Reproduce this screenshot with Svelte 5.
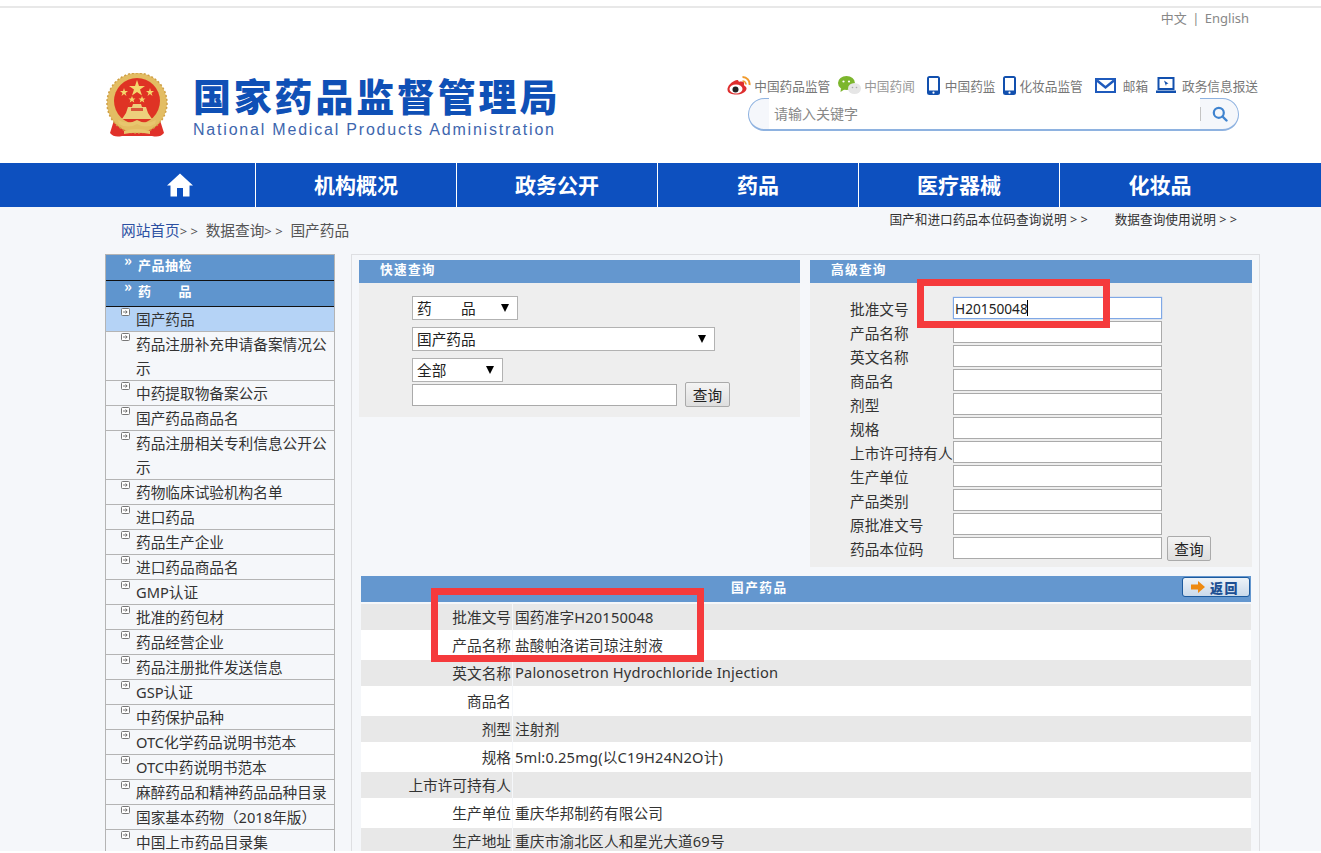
<script>
    const nav = ['机构概况', '政务公开', '药品', '医疗器械', '化妆品'];

    const sideItems = [
        '国产药品', '药品注册补充申请备案情况公示', '中药提取物备案公示', '国产药品商品名',
        '药品注册相关专利信息公开公示', '药物临床试验机构名单', '进口药品', '药品生产企业',
        '进口药品商品名', 'GMP认证', '批准的药包材', '药品经营企业', '药品注册批件发送信息',
        'GSP认证', '中药保护品种', 'OTC化学药品说明书范本', 'OTC中药说明书范本',
        '麻醉药品和精神药品品种目录', '国家基本药物（2018年版）', '中国上市药品目录集'
    ];

    const advFields = [
        '产品名称', '英文名称', '商品名', '剂型', '规格', '上市许可持有人',
        '生产单位', '产品类别', '原批准文号'
    ];

    const details = [
        ['批准文号', '国药准字H20150048'],
        ['产品名称', '盐酸帕洛诺司琼注射液'],
        ['英文名称', 'Palonosetron Hydrochloride Injection'],
        ['商品名', ''],
        ['剂型', '注射剂'],
        ['规格', '5ml:0.25mg(以C19H24N2O计)'],
        ['上市许可持有人', ''],
        ['生产单位', '重庆华邦制药有限公司'],
        ['生产地址', '重庆市渝北区人和星光大道69号']
    ];
</script>

<div class="page">
    <div class="topline"></div>

    <div class="wrap">
        <div class="lang">中文 <i>|</i> English</div>

        <div class="brand">
            <div class="logo">
                <svg class="emblem" viewBox="0 0 62 66" width="62" height="66" aria-hidden="true">
                    <path d="M9 44 L4 60 Q8 65 16 63 L46 63 Q54 65 58 60 L53 44 Z" fill="#e0312a" />
                    <circle cx="31" cy="30" r="30" fill="#e3bd63" />
                    <circle cx="31" cy="30" r="30" fill="none" stroke="#cf9f45" stroke-width="1.5" stroke-dasharray="2 2" />
                    <circle cx="31" cy="28" r="23" fill="#df3324" />
                    <polygon points="31,7 33,13 39,13 34,16.5 36,22.500 31,19 26,22.500 28,16.500 23,13 29,13" fill="#f4d76c" />
                    <polygon points="18,15 19,18 22,18 19.500,20 20.500,23 18,21 15.500,23 16.500,20 14,18 17,18" fill="#f4d76c" />
                    <polygon points="44,15 45,18 48,18 45.500,20 46.500,23 44,21 41.500,23 42.500,20 40,18 43,18" fill="#f4d76c" />
                    <polygon points="26,23 27,25.500 29.500,25.500 27.500,27 28.300,29.500 26,28 23.700,29.500 24.500,27 22.500,25.500 25,25.500" fill="#f4d76c" />
                    <polygon points="36,23 37,25.500 39.500,25.500 37.500,27 38.300,29.500 36,28 33.700,29.500 34.500,27 32.500,25.500 35,25.500" fill="#f4d76c" />
                    <path d="M20 40 L22 34 H26 L27 31 H35 L36 34 H40 L42 40 L46 46 H16 Z" fill="#edcf7c" />
                    <path d="M25 35 H37 V38 H25 Z" fill="#d9573a" />
                    <path d="M12 47 Q22 52 31 47 Q40 52 50 47 L49 51 Q40 56 31 51 Q22 56 13 51 Z" fill="#e8c66e" />
                    <path d="M18 58 Q31 54 44 58 L44 61 Q31 58 18 61 Z" fill="#e8c66e" />
                </svg>
                <div class="wordmark">
                    <div class="cn">国家药品监督管理局</div>
                    <div class="en">National Medical Products Administration</div>
                </div>
            </div>

            <div class="tools">
                <div class="links">
                    <a>
                        <svg viewBox="0 0 24 20" width="24" height="20" aria-hidden="true">
                            <path d="M10 5 C5 6 0 11 0.500 15 C1 19 7 20 11 19.500 C16 19 20 16 19.500 13 C19 11 17 11 17 10 C18 7 16 6 13 6.500 C11 7.500 12 4.500 10 5 Z" fill="#de2e2e" />
                            <ellipse cx="9" cy="14" rx="6.500" ry="4.500" fill="#fff" />
                            <circle cx="8.500" cy="14.500" r="3" fill="#222" />
                            <path d="M15.500 2 A7 7 0 0 1 22.500 10" fill="none" stroke="#f09a2c" stroke-width="2" />
                            <path d="M15.500 6 A3.500 3.500 0 0 1 19 9.500" fill="none" stroke="#f09a2c" stroke-width="1.700" />
                        </svg>
                        中国药品监管
                    </a>
                    <a class="soft">
                        <svg viewBox="0 0 23 18" width="23" height="18" aria-hidden="true">
                            <ellipse cx="8.500" cy="7" rx="8.500" ry="7" fill="#7cb62d" />
                            <path d="M3 12 L2.500 16 L7 13 Z" fill="#7cb62d" />
                            <circle cx="5.500" cy="5.500" r="1.100" fill="#fff" />
                            <circle cx="11" cy="5.500" r="1.100" fill="#fff" />
                            <ellipse cx="16.500" cy="12.500" rx="6.500" ry="5.500" fill="#e6e6e6" />
                            <circle cx="14.500" cy="11.500" r=".8" fill="#aaa" />
                            <circle cx="18.500" cy="11.500" r=".8" fill="#aaa" />
                        </svg>
                        中国药闻
                    </a>
                    <a class="far">
                        <svg viewBox="0 0 13 19" width="13" height="19" aria-hidden="true">
                            <rect x="0" y="0" width="13" height="19" rx="2.500" fill="#1250ae" />
                            <rect x="2" y="2" width="9" height="12.500" fill="#fff" />
                            <circle cx="6.500" cy="16.700" r="1.100" fill="#fff" />
                        </svg>
                        中国药监
                    </a>
                    <a>
                        <svg viewBox="0 0 13 19" width="13" height="19" aria-hidden="true">
                            <rect x="0" y="0" width="13" height="19" rx="2.500" fill="#1250ae" />
                            <rect x="2" y="2" width="9" height="12.500" fill="#fff" />
                            <circle cx="6.500" cy="16.700" r="1.100" fill="#fff" />
                        </svg>
                        化妆品监管
                    </a>
                    <a class="far wide">
                        <svg viewBox="0 0 21 15" width="21" height="15" aria-hidden="true">
                            <rect x="1" y="1" width="19" height="13" fill="#fff" stroke="#1f5abc" stroke-width="2" />
                            <path d="M2 2.500 L10.500 9.500 L19 2.500" fill="none" stroke="#1f5abc" stroke-width="2.500" />
                        </svg>
                        邮箱
                    </a>
                    <a class="report">
                        <svg viewBox="0 0 20 16" width="20" height="16" aria-hidden="true">
                            <rect x="2.500" y="1" width="15" height="11" fill="#fff" stroke="#1250ae" stroke-width="2" />
                            <path d="M8 3.500 L12.500 6.500 L10.500 7 L10 9 Z" fill="#1250ae" />
                            <rect x="0" y="13.500" width="20" height="2.500" fill="#1250ae" />
                        </svg>
                        政务信息报送
                    </a>
                </div>

                <div class="search">
                    <input type="text" placeholder="请输入关键字" />
                    <i class="sep"></i>
                    <svg viewBox="0 0 16 16" width="16" height="16" aria-hidden="true">
                        <circle cx="6.800" cy="6.800" r="5" fill="none" stroke="#3f83cf" stroke-width="2.200" />
                        <path d="M10.500 10.500 L14.500 14.500" stroke="#3f83cf" stroke-width="2.400" stroke-linecap="round" />
                    </svg>
                </div>
            </div>
        </div>
    </div>

    <nav class="mainnav">
        <div class="navrow">
            <a class="home" aria-label="首页">
                <svg viewBox="0 0 26 24" width="26" height="24" aria-hidden="true">
                    <path d="M13 0.500 L26 12.500 L22.500 12.500 L22.500 23.500 L16 23.500 L16 15 L10 15 L10 23.500 L3.500 23.500 L3.500 12.500 L0 12.500 Z" fill="#fff" />
                </svg>
            </a>
            {#each nav as item}
                <a>{item}</a>
            {/each}
        </div>
    </nav>

    <div class="wrap crumbs">
        <div class="path"><a>网站首页</a><b>&gt; &gt;</b> 数据查询<b>&gt; &gt;</b> 国产药品</div>
        <div class="help">
            <span>国产和进口药品本位码查询说明 &gt; &gt;</span>
            <span>数据查询使用说明 &gt; &gt;</span>
        </div>
    </div>

    <div class="wrap main">
        <aside class="side">
            <div class="head"><em>»</em><span>产品抽检</span></div>
            <div class="head"><em>»</em><span>药　　品</span></div>
            {#each sideItems as item, i}
                <div class="item" class:on={i === 0}>
                    <svg viewBox="0 0 9 8" width="9" height="8" aria-hidden="true">
                        <rect x="0.500" y="0.500" width="8" height="7" rx="1" fill="#fff" stroke="#777" />
                        <path d="M2 4 H6 M4.500 2.500 L6.200 4 L4.500 5.500" fill="none" stroke="#555" stroke-width=".8" />
                    </svg>
                    <span>{item}</span>
                </div>
            {/each}
        </aside>

        <section class="content">
            <div class="panels">
                <div class="panel quick">
                    <h3>快速查询</h3>
                    <div class="quickform">
                        <div class="sel s1"><select><option>药　　品</option></select></div>
                        <div class="sel s2"><select><option>国产药品</option></select></div>
                        <div class="sel s3"><select><option>全部</option></select></div>
                        <div class="searchline">
                            <input type="text" />
                            <button>查询</button>
                        </div>
                    </div>
                </div>

                <div class="panel adv">
                    <h3>高级查询</h3>
                    <div class="advform">
                        <label>
                            <span>批准文号</span>
                            <span class="field">
                                <input class="focus" type="text" value="H20150048" />
                                <i class="caret"></i>
                            </span>
                        </label>
                        {#each advFields as f}
                            <label><span>{f}</span><input type="text" /></label>
                        {/each}
                        <label>
                            <span>药品本位码</span><input type="text" />
                            <button>查询</button>
                        </label>
                    </div>
                </div>
            </div>

            <div class="result">
                <div class="restitle">
                    <span>国产药品</span>
                    <a class="back">
                        <svg viewBox="0 0 14 12" width="14" height="12" aria-hidden="true">
                            <path d="M0 3.500 H7 V0 L14 6 L7 12 V8.500 H0 Z" fill="#ee8a12" />
                        </svg>
                        返回
                    </a>
                </div>
                <table>
                    <tbody>
                        {#each details as [k, v]}
                            <tr>
                                <th>{k}</th>
                                <td>{v}</td>
                            </tr>
                        {/each}
                    </tbody>
                </table>
            </div>
        </section>
    </div>

    <!-- red annotation boxes drawn over the screenshot -->
    <div class="mark m1"></div>
    <div class="mark m2"></div>
</div>

<style>
    :global(html), :global(body) {
        background: #fff;
    }

    .page {
        position: relative;
        height: 851px;
        overflow: hidden;
        background: #f5f7fa;
        color: #333;
        font-family: "Noto Sans", "Noto Sans CJK SC", sans-serif;
        font-size: 14.67px;
    }

    a {
        color: inherit;
        text-decoration: none;
    }

    .topline {
        height: 6px;
        background: #fff;
        border-bottom: 2px solid #e8e8e8;
    }

    .wrap {
        width: 1155px;
        margin-left: 105px;
    }

    /* header block is white, breadcrumb below sits on the grey page */
    .wrap:nth-child(2) {
        width: auto;
        margin-left: 0;
        padding-left: 105px;
        height: 155px;
        background: #fff;
    }

    .lang {
        width: 1144px;
        height: 20px;
        line-height: 20px;
        font-size: 13px;
        color: #888;
        text-align: right;
    }

    .lang i {
        font-style: normal;
        margin: 0 2px;
    }

    .brand {
        display: flex;
        justify-content: space-between;
        width: 1155px;
        margin-top: 46px;
    }

    .logo {
        display: flex;
    }

    .emblem {
        margin: -1px 25px 0 1px;
    }

    .wordmark {
        color: #0f50b6;
    }

    .cn {
        margin-top: -1px;
        height: 41px;
        line-height: 44px;
        font-family: "Noto Sans CJK SC", sans-serif;
        font-size: 38px;
        font-weight: 900;
        letter-spacing: 2.800px;
        white-space: nowrap;
    }

    .en {
        margin-top: 7px;
        line-height: 18px;
        font-family: "Liberation Sans", sans-serif;
        font-size: 16px;
        letter-spacing: 1.800px;
        color: #3e66ae;
        white-space: nowrap;
    }

    .tools {
        display: flex;
        flex-direction: column;
        align-items: flex-end;
    }

    .links {
        display: flex;
        align-items: center;
        gap: 8px;
        height: 22px;
        margin-right: 2px;
        font-size: 12.67px;
        color: #777;
        white-space: nowrap;
    }

    .links a {
        display: flex;
        align-items: center;
        gap: 3px;
    }

    .links svg {
        flex: none;
    }

    .links .soft {
        color: #999;
    }

    .links .far {
        margin-left: 4px;
        gap: 5px;
    }

    .links .wide {
        gap: 7px;
    }

    .links .report {
        gap: 6px;
    }

    .search {
        box-sizing: border-box;
        display: flex;
        align-items: center;
        width: 491px;
        height: 33px;
        margin: 2px 21px 0 0;
        border: solid #8eb2e0;
        border-width: 1px 1px 2px;
        border-radius: 17px;
        background: #f5f7fb;
    }

    .search input {
        box-sizing: border-box;
        width: 431px;
        height: 31px;
        margin: -1px 0 0 20px;
        padding: 0 0 0 5px;
        border: 0;
        background: #fff;
        outline: 0;
        font: inherit;
        font-size: 14px;
    }

    .search input::placeholder {
        color: #888;
    }

    .sep {
        flex: none;
        width: 1px;
        height: 14px;
        margin-right: 11px;
        background: #c4c4c4;
    }

    .mainnav {
        height: 44px;
        background: #0d50bf;
    }

    .navrow {
        display: flex;
        margin-left: 105px;
    }

    .navrow a {
        width: 200px;
        height: 44px;
        border-left: 1px solid #fff;
        box-sizing: content-box;
        color: #fff;
        font-family: "Noto Sans CJK SC", sans-serif;
        font-size: 21px;
        font-weight: 700;
        line-height: 43px;
        text-align: center;
    }

    .navrow .home {
        display: flex;
        align-items: center;
        justify-content: center;
        width: 150px;
        border-left: 0;
    }

    .crumbs {
        display: flex;
        justify-content: space-between;
        height: 46px;
    }

    .path {
        margin: 15px 0 0 16px;
        line-height: 17px;
        color: #555;
        font-size: 14.67px;
    }

    .path a {
        color: #2c50a2;
    }

    .path b {
        font-weight: 400;
        font-size: 13px;
        margin-right: 4px;
    }

    .help {
        display: flex;
        gap: 27px;
        margin: 3px 23px 0 0;
        line-height: 18px;
        font-size: 12.67px;
        color: #333;
    }

    .main {
        display: flex;
        gap: 16px;
        margin-top: 1px;
    }

    .side {
        flex: none;
        box-sizing: border-box;
        width: 230px;
        border: solid #b4b4b4;
        border-width: 1px 1px 0;
        height: 600px;
    }

    .head {
        display: flex;
        height: 25px;
        border-bottom: 1px solid #111;
        background: #5f95ce;
        color: #fff;
        font-family: "Noto Sans CJK SC", sans-serif;
        font-size: 13px;
        font-weight: 700;
        letter-spacing: .5px;
        line-height: 19px;
    }

    .head em {
        width: 14px;
        margin-left: 18px;
        font-style: normal;
        font-size: 15px;
        line-height: 10px;
    }

    .item {
        display: flex;
        border-bottom: 1px solid #b4b4b4;
        line-height: 24px;
        color: #333;
    }

    .item.on {
        background: #b5d3f6;
    }

    .item svg {
        flex: none;
        margin: 1px 6px 0 15px;
    }

    .content {
        box-sizing: border-box;
        width: 909px;
        height: 600px;
        padding: 5px 0 0 7px;
        border: solid #dedfe2;
        border-width: 1px 1px 0;
    }

    .panels {
        display: flex;
        gap: 10px;
        align-items: flex-start;
    }

    .panel {
        background: #eeeeee;
    }

    .panel h3 {
        margin: 0;
        height: 23px;
        padding-left: 21px;
        background: #6497cf;
        color: #fff;
        font-family: "Noto Sans CJK SC", sans-serif;
        font-size: 12.67px;
        font-weight: 700;
        letter-spacing: 1.300px;
        line-height: 18px;
    }

    .quick {
        width: 441px;
        height: 157px;
    }

    .adv {
        width: 442px;
        height: 307px;
    }

    .quickform {
        padding: 13px 0 0 53px;
    }

    .sel {
        position: relative;
        box-sizing: border-box;
        height: 24px;
        margin-bottom: 7px;
    }

    .sel::after {
        content: "";
        position: absolute;
        top: 8px;
        right: 9px;
        border: 4px solid transparent;
        border-top: 8px solid #000;
        border-bottom: 0;
    }

    .s1 { width: 106px; }
    .s2 { width: 303px; }
    .s3 { width: 91px; margin-bottom: 0; }

    .sel select {
        appearance: none;
        box-sizing: border-box;
        width: 100%;
        height: 100%;
        padding: 0 0 0 4px;
        border: 1px solid #b2b2b2;
        border-radius: 0;
        background: #fff;
        color: #222;
        font: inherit;
    }

    input {
        box-sizing: border-box;
        border: 1px solid #aaa;
        background: #fff;
        color: #222;
        font: inherit;
        outline: 0;
    }

    button {
        box-sizing: border-box;
        padding: 0;
        border: 1px solid #aaa;
        border-radius: 2px;
        background: linear-gradient(#f4f4f4, #dedede);
        color: #222;
        font: inherit;
    }

    .searchline {
        display: flex;
        align-items: center;
        gap: 8px;
    }

    .searchline input {
        width: 265px;
        height: 22px;
    }

    .searchline button {
        width: 45px;
        height: 25px;
    }

    .advform {
        padding: 13px 0 0 40px;
    }

    .advform label {
        display: flex;
        align-items: center;
        height: 24px;
        color: #333;
    }

    .advform label > span:first-child {
        flex: none;
        width: 103px;
        white-space: nowrap;
    }

    .advform input {
        width: 209px;
        height: 22px;
        padding: 0 1px;
    }

    .field {
        position: relative;
        display: flex;
    }

    .advform input.focus {
        border: 1px solid #7fa8e6;
        box-shadow: 0 0 1px #7fa8e6;
        font-size: 13.7px;
    }

    /* text caret of the focused field */
    .caret {
        position: absolute;
        left: 74px;
        top: 3px;
        width: 1px;
        height: 16px;
        background: #000;
    }

    .advform button {
        width: 44px;
        height: 25px;
        margin-left: 5px;
    }

    .result {
        width: 890px;
        margin: 9px 0 0 2px;
    }

    .restitle {
        display: flex;
        align-items: center;
        height: 26px;
        margin-bottom: 2px;
        padding: 0 1px 0 370px;
        background: #6497cf;
        color: #fff;
        font-family: "Noto Sans CJK SC", sans-serif;
        font-size: 12.67px;
        font-weight: 700;
        letter-spacing: 1.500px;
    }

    .restitle > span {
        margin-top: -6px;
    }

    .back {
        box-sizing: border-box;
        display: flex;
        align-items: center;
        gap: 5px;
        width: 68px;
        height: 20px;
        margin: -4px 0 0 auto;
        padding-left: 8px;
        border: 1px solid #1c5a9e;
        border-radius: 3px;
        background: linear-gradient(#eef3f8, #cad9ea);
        color: #1d4f93;
        font-size: 13px;
        font-weight: 900;
    }

    table {
        width: 100%;
        border-collapse: collapse;
    }

    tr {
        height: 30px;
        background: #fff;
    }

    tr:nth-child(odd) {
        height: 26px;
        background: #e8e8e8;
    }

    th, td {
        padding: 0 0 2px;
        font-weight: 400;
        color: #333;
    }

    th {
        width: 150px;
        padding-right: 1px;
        border-right: 1px solid #f5f7fa;
        text-align: right;
        white-space: nowrap;
    }

    td {
        padding-left: 2px;
        letter-spacing: .16px;
    }

    .mark {
        position: absolute;
        box-sizing: border-box;
        border: 7px solid #f53a3c;
    }

    .m1 {
        left: 917px;
        top: 279px;
        width: 193px;
        height: 49px;
    }

    .m2 {
        left: 431px;
        top: 588px;
        width: 273px;
        height: 74px;
    }
</style>
